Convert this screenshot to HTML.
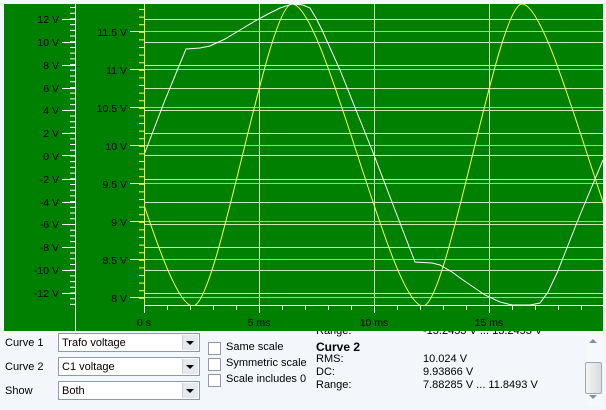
<!DOCTYPE html>
<html><head><meta charset="utf-8"><style>
body{margin:0;width:606px;height:410px;overflow:hidden;background:#f3f6fb;font-family:"Liberation Sans",sans-serif;font-size:11px;position:relative}
.lbl{position:absolute;font-size:11px;color:#000}
.cb{position:absolute;left:58px;width:142px;height:19px;background:#fff;border:1px solid #8a9bb0;box-sizing:border-box}
.cb span{position:absolute;left:3px;top:3px}
.cb i{position:absolute;right:1px;top:1px;width:15px;height:15px;background:#e6e9ee;border-left:1px solid #c8ccd4}
.cb i:after{content:"";position:absolute;left:3px;top:6px;border-left:4px solid transparent;border-right:4px solid transparent;border-top:4px solid #000}
.ck{position:absolute;left:208px;width:11px;height:11px;border:1px solid #8a9bb0;background:#fff}
</style></head><body>
<svg width="606" height="331" style="position:absolute;left:0;top:0" font-family="Liberation Sans, sans-serif" font-size="11">
<rect x="0" y="0" width="606" height="331" fill="#f3f6fb"/>
<rect x="4" y="4" width="599" height="327" fill="#008000"/>
<g stroke="#c8e8b8" stroke-width="1">
<line x1="144" x2="603" y1="19.5" y2="19.5"/><line x1="144" x2="603" y1="42.5" y2="42.5"/><line x1="144" x2="603" y1="65.5" y2="65.5"/><line x1="144" x2="603" y1="88.5" y2="88.5"/><line x1="144" x2="603" y1="110.5" y2="110.5"/><line x1="144" x2="603" y1="133.5" y2="133.5"/><line x1="144" x2="603" y1="155.5" y2="155.5"/><line x1="144" x2="603" y1="179.5" y2="179.5"/><line x1="144" x2="603" y1="202.5" y2="202.5"/><line x1="144" x2="603" y1="224.5" y2="224.5"/><line x1="144" x2="603" y1="247.5" y2="247.5"/><line x1="144" x2="603" y1="270.5" y2="270.5"/><line x1="144" x2="603" y1="293.5" y2="293.5"/>
<line x1="259.5" x2="259.5" y1="4" y2="305"/><line x1="374.5" x2="374.5" y1="4" y2="305"/><line x1="489.5" x2="489.5" y1="4" y2="305"/>
</g>
<g stroke="#b4d830" stroke-width="1">
<line x1="144" x2="603" y1="31.5" y2="31.5"/><line x1="144" x2="603" y1="69.5" y2="69.5"/><line x1="144" x2="603" y1="107.5" y2="107.5"/><line x1="144" x2="603" y1="145.5" y2="145.5"/><line x1="144" x2="603" y1="183.5" y2="183.5"/><line x1="144" x2="603" y1="221.5" y2="221.5"/><line x1="144" x2="603" y1="259.5" y2="259.5"/><line x1="144" x2="603" y1="297.5" y2="297.5"/>
</g>
<line x1="75.5" x2="75.5" y1="4" y2="331" stroke="#fff"/>
<line x1="72.5" x2="72.5" y1="7" y2="305" stroke="#fff" stroke-width="5" stroke-dasharray="1 4.71"/>
<g stroke="#fff">
<line x1="62" x2="75" y1="19.5" y2="19.5"/><line x1="62" x2="75" y1="42.5" y2="42.5"/><line x1="62" x2="75" y1="65.5" y2="65.5"/><line x1="62" x2="75" y1="88.5" y2="88.5"/><line x1="62" x2="75" y1="110.5" y2="110.5"/><line x1="62" x2="75" y1="133.5" y2="133.5"/><line x1="62" x2="75" y1="155.5" y2="155.5"/><line x1="62" x2="75" y1="179.5" y2="179.5"/><line x1="62" x2="75" y1="202.5" y2="202.5"/><line x1="62" x2="75" y1="224.5" y2="224.5"/><line x1="62" x2="75" y1="247.5" y2="247.5"/><line x1="62" x2="75" y1="270.5" y2="270.5"/><line x1="62" x2="75" y1="293.5" y2="293.5"/>
</g>
<g fill="#000" text-anchor="end" font-size="10.5">
<text x="59" y="23">12 V</text><text x="59" y="46">10 V</text><text x="59" y="69">8 V</text><text x="59" y="92">6 V</text><text x="59" y="114">4 V</text><text x="59" y="137">2 V</text><text x="59" y="160">0 V</text><text x="59" y="183">-2 V</text><text x="59" y="206">-4 V</text><text x="59" y="228">-6 V</text><text x="59" y="251">-8 V</text><text x="59" y="274">-10 V</text><text x="59" y="297">-12 V</text>
<text x="127" y="36">11.5 V</text><text x="127" y="74">11 V</text><text x="127" y="112">10.5 V</text><text x="127" y="150">10 V</text><text x="127" y="188">9.5 V</text><text x="127" y="226">9 V</text><text x="127" y="264">8.5 V</text><text x="127" y="302">8 V</text>
</g>
<line x1="141.5" x2="141.5" y1="9" y2="305" stroke="#ffff40" stroke-width="5" stroke-dasharray="1 6.6"/>
<g stroke="#ffff40">
<line x1="130" x2="144" y1="31.5" y2="31.5"/><line x1="130" x2="144" y1="69.5" y2="69.5"/><line x1="130" x2="144" y1="107.5" y2="107.5"/><line x1="130" x2="144" y1="145.5" y2="145.5"/><line x1="130" x2="144" y1="183.5" y2="183.5"/><line x1="130" x2="144" y1="221.5" y2="221.5"/><line x1="130" x2="144" y1="259.5" y2="259.5"/><line x1="130" x2="144" y1="297.5" y2="297.5"/>
</g>
<line x1="144.5" x2="144.5" y1="4" y2="306" stroke="#ffff40"/>
<line x1="144" x2="603" y1="305.5" y2="305.5" stroke="#fff"/>
<line x1="144" x2="603" y1="308" y2="308" stroke="#fff" stroke-width="4" stroke-dasharray="1 22"/>
<g stroke="#fff"><line x1="144.5" x2="144.5" y1="305" y2="313"/><line x1="259.5" x2="259.5" y1="305" y2="313"/><line x1="374.5" x2="374.5" y1="305" y2="313"/><line x1="489.5" x2="489.5" y1="305" y2="313"/></g>
<g fill="#000" text-anchor="middle" font-size="10.5"><text x="144" y="326">0 s</text><text x="259" y="326">5 ms</text><text x="374" y="326">10 ms</text><text x="489" y="326">15 ms</text></g>
<clipPath id="c"><rect x="145" y="3" width="458" height="303"/></clipPath>
<g clip-path="url(#c)" fill="none">
<path d="M62,4 C95,4 160,306 193,306 C218,306 267,4 292,4 C325,4 390,306 423,306 C448,306 497,4 522,4 C555,4 620,306 653,306" stroke="#ffff40"/>
<polyline stroke="#fff" points="144,155 165,100 186,49 200,48 210,46 225,39 240,30 255,21 268,14 280,8 292,4 303,5 310,8 316,18 322,30 340,70 360,120 374,155 395,210 415,262 432,263 440,265 452,272 463,280 485,295 500,302 512,305 530,305 540,303 548,292 557,273 580,215 603,160"/>
</g>
</svg>
<div class="lbl" style="left:5px;top:337px">Curve 1</div>
<div class="cb" style="top:333px"><span>Trafo voltage</span><i></i></div>
<div class="lbl" style="left:5px;top:361px">Curve 2</div>
<div class="cb" style="top:357px"><span>C1 voltage</span><i></i></div>
<div class="lbl" style="left:5px;top:385px">Show</div>
<div class="cb" style="top:381px"><span>Both</span><i></i></div>
<div class="ck" style="top:342px"></div><div class="lbl" style="left:226px;top:341px">Same scale</div>
<div class="ck" style="top:358px"></div><div class="lbl" style="left:226px;top:357px">Symmetric scale</div>
<div class="ck" style="top:374px"></div><div class="lbl" style="left:226px;top:373px">Scale includes 0</div>
<div style="position:absolute;left:312px;top:331px;width:270px;height:75px;overflow:hidden">
<div class="lbl" style="left:4px;top:-6px">Range:</div><div class="lbl" style="left:111px;top:-6px">-13.2453 V ... 13.2453 V</div>
<div class="lbl" style="left:4px;top:9px;font-weight:bold;font-size:12px">Curve 2</div>
<div class="lbl" style="left:4px;top:22px">RMS:</div><div class="lbl" style="left:111px;top:22px">10.024 V</div>
<div class="lbl" style="left:4px;top:35px">DC:</div><div class="lbl" style="left:111px;top:35px">9.93866 V</div>
<div class="lbl" style="left:4px;top:48px">Range:</div><div class="lbl" style="left:111px;top:48px">7.88285 V ... 11.8493 V</div>
</div>
<div style="position:absolute;left:585px;top:331px;width:17px;height:75px;background:#f6f8fb">
<div style="position:absolute;left:4px;top:8px;border-left:4px solid transparent;border-right:4px solid transparent;border-bottom:4px solid #8090a0"></div>
<div style="position:absolute;left:0;top:31px;width:15px;height:30px;border:1px solid #a0a8b4;border-radius:2px;background:linear-gradient(90deg,#f4f4f6,#d8dbe0)"></div>
<div style="position:absolute;left:4px;top:64px;border-left:4px solid transparent;border-right:4px solid transparent;border-top:4px solid #8090a0"></div>
</div>
</body></html>
